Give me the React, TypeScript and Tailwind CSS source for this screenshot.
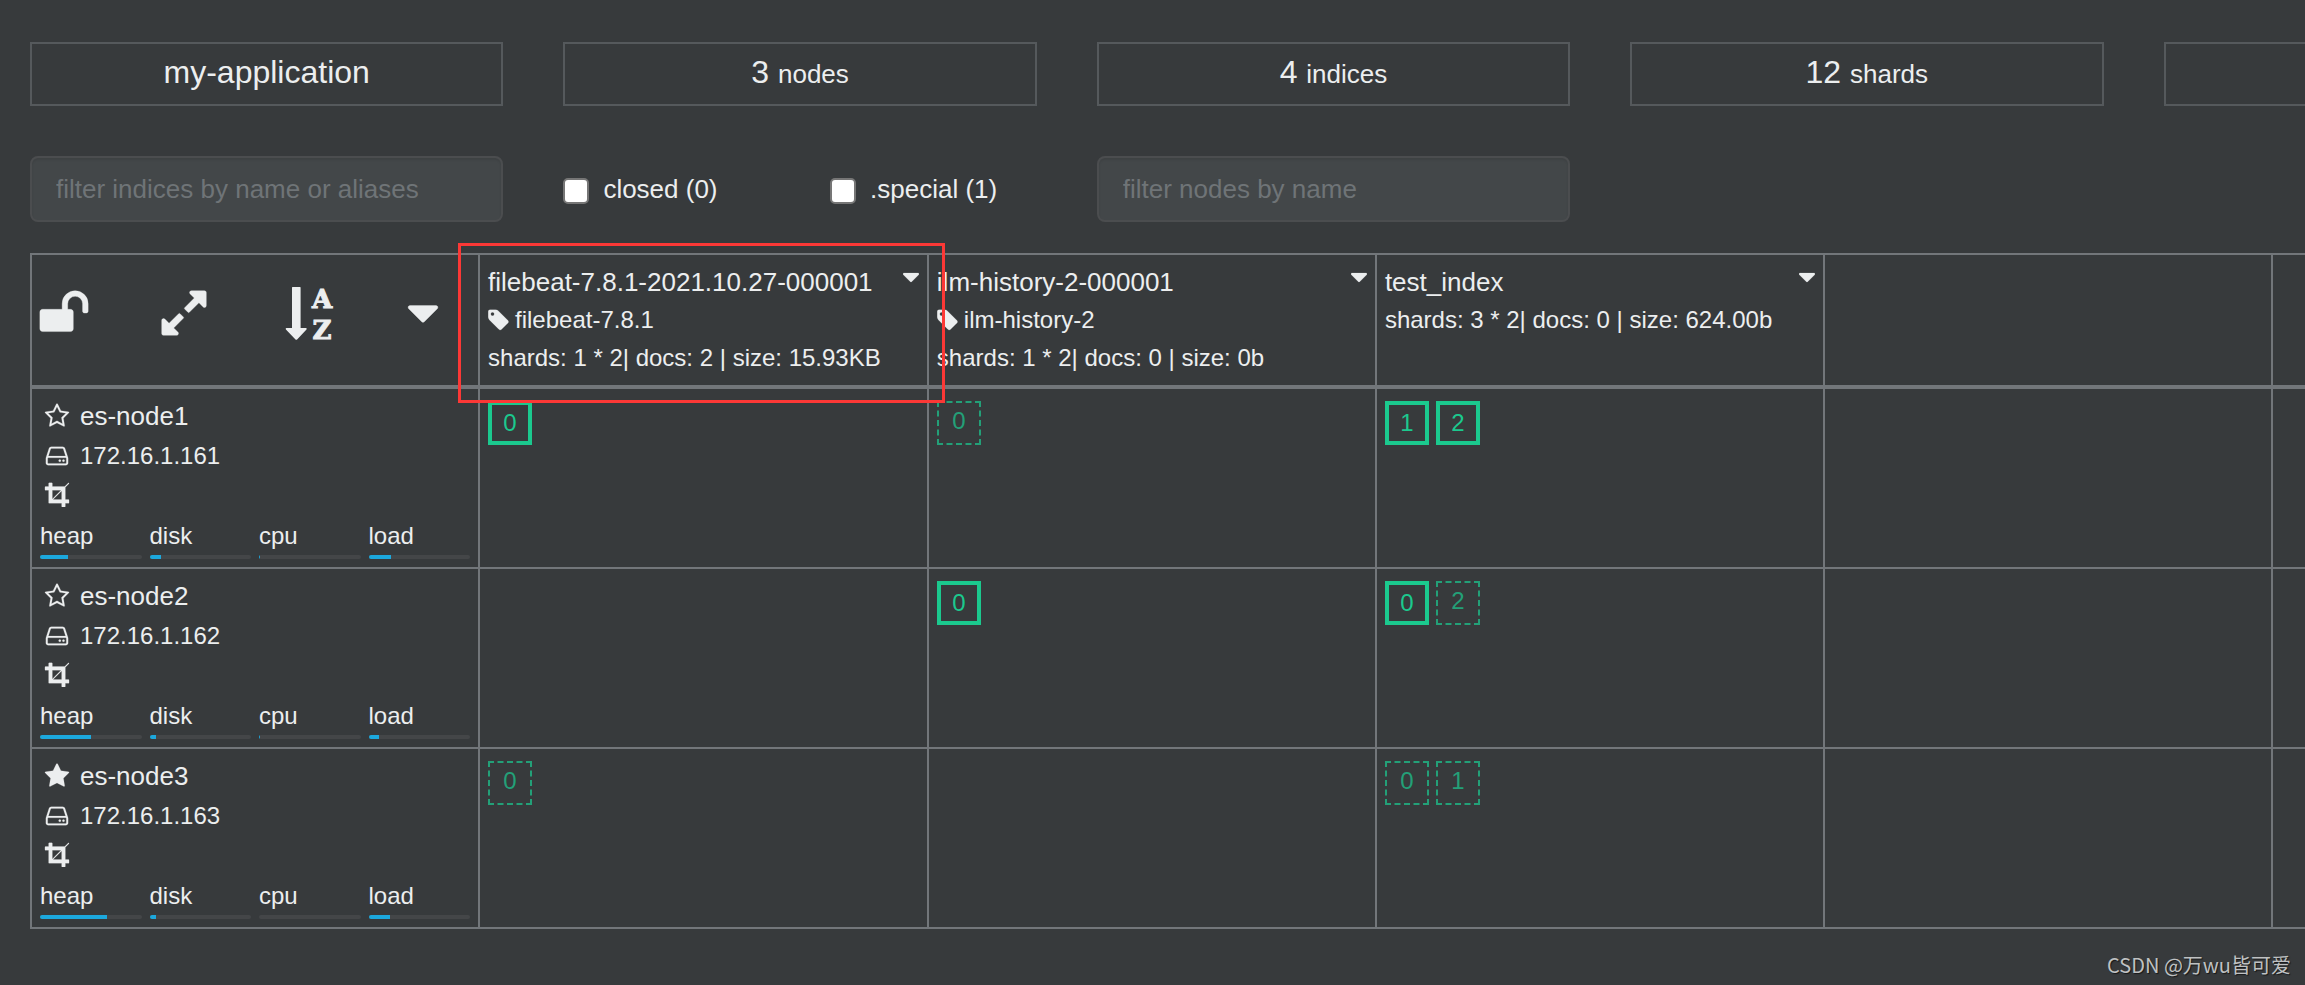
import React, { useState } from "react";

const ICONS = {
  unlock:
    "M1728 576v256q0 26-19 45t-45 19h-64q-26 0-45-19t-19-45v-256q0-106-75-181t-181-75-181 75-75 181v192h96q40 0 68 28t28 68v576q0 40-28 68t-68 28h-960q-40 0-68-28t-28-68v-576q0-40 28-68t68-28h672v-192q0-185 131.500-316.500t316.500-131.500 316.500 131.500 131.500 316.500z",
  expand:
    "M883 1056q0 13-10 23l-332 332 144 144q19 19 19 45t-19 45-45 19h-448q-26 0-45-19t-19-45v-448q0-26 19-45t45-19 45 19l144 144 332-332q10-10 23-10t23 10l114 114q10 10 10 23zm781-864v448q0 26-19 45t-45 19-45-19l-144-144-332 332q-10 10-23 10t-23-10l-114-114q-10-10-10-23t10-23l332-332-144-144q-19-19-19-45t19-45 45-19h448q26 0 45 19t19 45z",
  caret:
    "M1408 704q0 26-19 45l-448 448q-19 19-45 19t-45-19l-448-448q-19-19-19-45t19-45 45-19h896q26 0 45 19t19 45z",
  tag: "M576 448q0-53-37.500-90.500t-90.500-37.500-90.500 37.500-37.500 90.500 37.500 90.500 90.500 37.500 90.500-37.500 37.500-90.500zm1067 576q0 53-37 90l-491 492q-39 37-91 37-53 0-90-37l-715-716q-38-37-64.500-101t-26.500-117v-416q0-52 38-90t90-38h416q53 0 117 26.500t102 64.500l715 714q37 39 37 91z",
  star: "M1728 647q0 22-26 48l-363 354 86 500q1 7 1 20 0 50-41 50-19 0-40-12l-449-236-449 236q-22 12-40 12-21 0-31.500-14.500t-10.500-35.500q0-6 2-20l86-500-364-354q-25-27-25-48 0-37 56-46l502-73 225-455q19-41 49-41t49 41l225 455 502 73q56 9 56 46z",
  starOutline:
    "M1201 1004l306-297-422-62-189-382-189 382-422 62 306 297-73 421 378-199 377 199zm527-357q0 22-26 48l-363 354 86 500q1 7 1 20 0 50-41 50-19 0-40-12l-449-236-449 236q-22 12-40 12-21 0-31.500-14.500t-10.500-35.500q0-6 2-20l86-500-364-354q-25-27-25-48 0-37 56-46l502-73 225-455q19-41 49-41t49 41l225 455 502 73q56 9 56 46z",
  hdd: "M1168 1216q0 33-23.500 56.500t-56.500 23.500-56.500-23.500-23.500-56.500 23.500-56.500 56.500-23.500 56.500 23.500 23.500 56.500zm256 0q0 33-23.500 56.500t-56.500 23.500-56.500-23.500-23.500-56.500 23.500-56.500 56.500-23.500 56.500 23.500 23.500 56.500zm112 160v-320q0-13-9.500-22.500t-22.500-9.500h-1216q-13 0-22.500 9.500t-9.500 22.500v320q0 13 9.500 22.500t22.500 9.500h1216q13 0 22.500-9.500t9.500-22.500zm-1230-480h1180l-157-482q-4-13-16-21.500t-26-8.500h-782q-14 0-26 8.500t-16 21.500zm1358 160v320q0 66-47 113t-113 47h-1216q-66 0-113-47t-47-113v-320q0-25 16-75l197-606q17-53 63-86t101-33h782q55 0 101 33t63 86l197 606q16 50 16 75z",
  crop: "M621 1280h595v-595zm-45-45l595-595h-595v595zm1152 77v192q0 14-9 23t-23 9h-224v224q0 14-9 23t-23 9h-192q-14 0-23-9t-9-23v-224h-864q-14 0-23-9t-9-23v-864h-224q-14 0-23-9t-9-23v-192q0-14 9-23t23-9h224v-224q0-14 9-23t23-9h192q14 0 23 9t9 23v224h851l246-247q10-9 23-9t23 9q9 10 9 23t-9 23l-247 246v851h224q14 0 23 9t9 23z",
};

type IconProps = {
  name: keyof typeof ICONS;
  className: string;
  viewBox?: string;
};

const Icon = ({ name, className, viewBox = "0 0 1792 1792" }: IconProps) => (
  <svg
    className={`shrink-0 ${className}`}
    viewBox={viewBox}
    fill="currentColor"
    stroke="currentColor"
    strokeWidth="12"
    aria-hidden="true"
  >
    <path d={ICONS[name]} />
  </svg>
);

const SortIcon = () => (
  <svg
    className="w-[52px] h-[52px] overflow-visible"
    viewBox="0 0 52 52"
    fill="currentColor"
    aria-hidden="true"
  >
    <path d="M15 0.600a.6.600 0 0 1 .6-.6h7.400a.6.600 0 0 1 .6.600V41h5.400q1.200.3.500 1.400l-9.400 10q-.8.600-1.600 0l-9.600-10q-.7-1.100.5-1.400H15z" />
    <g
      fontSize="26"
      fontWeight="700"
      fontFamily="'DejaVu Serif', serif"
      textAnchor="middle"
      stroke="currentColor"
      strokeWidth="1"
    >
      <text x="45" y="21">
        A
      </text>
      <text x="45" y="52">
        Z
      </text>
    </g>
  </svg>
);

type ShardInfo = { id: number; primary: boolean };

const stats = [
  { value: "my-application" },
  { value: "3", label: "nodes" },
  { value: "4", label: "indices" },
  { value: "12", label: "shards" },
  { value: "" },
];

const indices = [
  {
    name: "filebeat-7.8.1-2021.10.27-000001",
    alias: "filebeat-7.8.1",
    info: "shards: 1 * 2| docs: 2 | size: 15.93KB",
    marked: true,
  },
  {
    name: "ilm-history-2-000001",
    alias: "ilm-history-2",
    info: "shards: 1 * 2| docs: 0 | size: 0b",
  },
  {
    name: "test_index",
    info: "shards: 3 * 2| docs: 0 | size: 624.00b",
  },
];

const nodes: {
  name: string;
  ip: string;
  master: boolean;
  usage: Record<string, number>;
  shards: ShardInfo[][];
}[] = [
  {
    name: "es-node1",
    ip: "172.16.1.161",
    master: false,
    usage: { heap: 28, disk: 11, cpu: 1, load: 22 },
    shards: [
      [{ id: 0, primary: true }],
      [{ id: 0, primary: false }],
      [
        { id: 1, primary: true },
        { id: 2, primary: true },
      ],
    ],
  },
  {
    name: "es-node2",
    ip: "172.16.1.162",
    master: false,
    usage: { heap: 50, disk: 6, cpu: 1, load: 10 },
    shards: [
      [],
      [{ id: 0, primary: true }],
      [
        { id: 0, primary: true },
        { id: 2, primary: false },
      ],
    ],
  },
  {
    name: "es-node3",
    ip: "172.16.1.163",
    master: true,
    usage: { heap: 66, disk: 6, cpu: 0, load: 21 },
    shards: [
      [{ id: 0, primary: false }],
      [],
      [
        { id: 0, primary: false },
        { id: 1, primary: false },
      ],
    ],
  },
];

const Stat = ({ value, label }: { value: string; label?: string }) => (
  <div className="col-span-2 px-[30px]">
    <div className="h-16 border-2 border-[#55595c] text-center text-[32px] leading-[56px]">
      {value} {label && <span className="text-[26px]">{label}</span>}
    </div>
  </div>
);

const Filter = ({ placeholder }: { placeholder: string }) => (
  <div className="col-span-2 px-[30px]">
    <input
      type="text"
      aria-label={placeholder}
      placeholder={placeholder}
      className="block w-full h-[66px] rounded-lg border-2 border-[#4b4d4f] bg-[#434749] px-6 text-[26px] shadow-[inset_0_2px_2px_rgba(0,0,0,0.08)] placeholder:text-[#6f7477] outline-none"
    />
  </div>
);

const Toggle = ({ id, label }: { id: string; label: string }) => {
  const [checked, setChecked] = useState(false);
  return (
    <div className="flex items-center pl-[30px] h-[66px]">
      <input
        id={id}
        type="checkbox"
        checked={checked}
        onChange={() => setChecked(!checked)}
        className="appearance-none w-[26px] h-[26px] mt-1 rounded-[5px] border-2 border-[#767676] bg-white checked:bg-[#1ca8dd]"
      />
      <label htmlFor={id} className="pl-3.5 text-[26px]">
        {label}
      </label>
    </div>
  );
};

const Shard = ({ id, primary }: ShardInfo) => (
  <span
    className={
      primary
        ? "w-11 h-11 border-4 border-[#1bc98e] text-[#1bc98e] text-center leading-9"
        : "w-11 h-11 border-2 border-dashed border-[#23a078] text-[#23a078] text-center leading-9"
    }
  >
    {id}
  </span>
);

const Usage = ({ label, value }: { label: string; value: number }) => (
  <div>
    <div className="leading-[39px]">{label}</div>
    <div className="h-1 rounded-sm bg-[#444648] overflow-hidden">
      <div className="h-full bg-[#1ca8dd]" style={{ width: `${value}%` }} />
    </div>
  </div>
);

const App = () => (
  <div
    className="relative min-h-screen overflow-hidden bg-[#373a3c] text-[#eceeef] text-2xl"
    style={{ fontFamily: '"Liberation Sans", Arial, sans-serif' }}
  >
    {/* the overview is wider than the window and runs off to the right */}
    <div className="w-[115.7%] pt-[42px]">
      <div className="grid grid-cols-10">
        {stats.map((stat, i) => (
          <Stat key={i} {...stat} />
        ))}
      </div>
      <div className="grid grid-cols-10 pt-[50px]">
        <Filter placeholder="filter indices by name or aliases" />
        <Toggle id="closed" label="closed (0)" />
        <Toggle id="special" label=".special (1)" />
        <Filter placeholder="filter nodes by name" />
      </div>
      <div className="px-[30px] pt-[31px]">
        <table className="w-full table-fixed border-collapse [&_td]:border-2 [&_td]:border-[#72767a] [&_th]:border-2 [&_th]:border-b-4 [&_th]:border-[#72767a]">
          <colgroup>
            <col className="w-[17.2%]" />
            <col className="w-[17.23%]" />
            <col className="w-[17.2%]" />
            <col className="w-[17.2%]" />
            <col className="w-[17.2%]" />
            <col />
          </colgroup>
          <thead>
            <tr>
              <th className="pl-1.5 pr-[29px] pb-3.5 align-middle">
                <div className="flex justify-between">
                  <button aria-label="unlock">
                    <Icon name="unlock" className="w-[52px] h-[52px]" />
                  </button>
                  <button aria-label="expand">
                    <Icon name="expand" className="w-[52px] h-[52px]" />
                  </button>
                  <button aria-label="sort">
                    <SortIcon />
                  </button>
                  <button aria-label="more">
                    <Icon name="caret" className="w-[52px] h-[52px]" />
                  </button>
                </div>
              </th>
              {indices.map(({ name, alias, info, marked }) => (
                <th key={name} className="p-2 align-top text-left font-normal leading-[38px]">
                  <div className="relative whitespace-nowrap">
                    <div className="flex items-start justify-between text-[26px]">
                      <span>{name}</span>
                      <button aria-label={`${name} menu`}>
                        <Icon name="caret" className="w-4 h-7" viewBox="384 0 1024 1792" />
                      </button>
                    </div>
                    {alias && (
                      <div className="flex items-center gap-1.5">
                        <Icon name="tag" className="w-[21px] h-6" viewBox="128 0 1536 1792" />
                        {alias}
                      </div>
                    )}
                    <div>{info}</div>
                    {marked && (
                      <div className="absolute z-10 -top-5 -bottom-[26px] -left-[30px] -right-[26px] border-3 border-[#fc3836] pointer-events-none" />
                    )}
                  </div>
                </th>
              ))}
              <th />
              <th />
            </tr>
          </thead>
          <tbody>
            {nodes.map(({ name, ip, master, usage, shards }) => (
              <tr key={name}>
                <td className="px-2 pt-[7px] pb-2">
                  <div className="flex items-center gap-2.5 pl-1 h-10 text-[26px]">
                    <Icon name={master ? "star" : "starOutline"} className="w-[26px] h-[26px]" />
                    {name}
                  </div>
                  <div className="flex items-center gap-2.5 pl-1 h-10">
                    <Icon name="hdd" className="w-[26px] h-[26px]" />
                    {ip}
                  </div>
                  <div className="flex items-center pl-1 h-9">
                    <Icon name="crop" className="w-[26px] h-[26px]" />
                  </div>
                  <div className="grid grid-cols-4 gap-2 pt-1">
                    {Object.entries(usage).map(([label, value]) => (
                      <Usage key={label} label={label} value={value} />
                    ))}
                  </div>
                </td>
                {shards.map((list, i) => (
                  <td key={i} className="px-2 pt-3 align-top">
                    <div className="flex gap-[7px]">
                      {list.map((shard) => (
                        <Shard key={shard.id} {...shard} />
                      ))}
                    </div>
                  </td>
                ))}
                <td />
                <td />
              </tr>
            ))}
          </tbody>
        </table>
      </div>
    </div>
    <div
      className="absolute bottom-1.5 right-3.5 text-xl text-[#bfc1c2] [text-shadow:1px_1px_1px_rgba(0,0,0,0.6)]"
      style={{ fontFamily: '"Noto Sans CJK SC", sans-serif' }}
    >
      CSDN @万wu皆可爱
    </div>
  </div>
);

export default App;
